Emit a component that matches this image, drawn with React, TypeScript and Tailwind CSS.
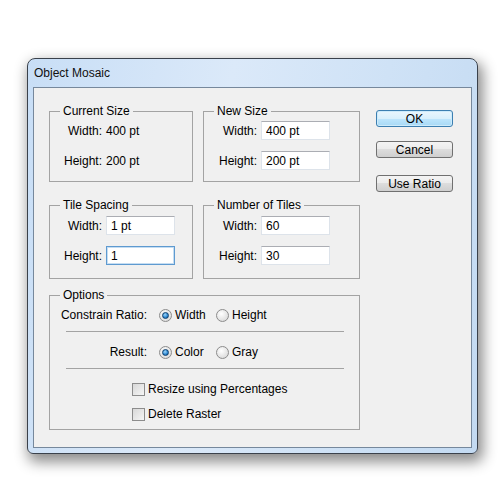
import React from 'react';

const inputBase =
  "h-[19px] w-[69px] bg-white px-[4px] text-[12px] leading-[17px] text-black outline-none font-['Liberation_Sans',Arial,sans-serif]";

function Group({ title, className, children }: {
  title: string,
  className: string,
  children: React.ReactNode
}) {
  return (
    <fieldset className={`border border-[#a3a3a3] ${className}`}>
      <legend className="ml-[10px] px-[3px] text-[12px] leading-[14px]">{title}</legend>
      {children}
    </fieldset>
  );
}

function Field({ label, value, labelW, focused }: {
  label: string,
  value: string,
  labelW: string,
  focused?: boolean
}) {
  return (
    <div className="flex h-[19px] items-center">
      <div className={`${labelW} text-right text-[12px]`}>{label}</div>
      <input
        readOnly
        value={value}
        className={
          focused
            ? `${inputBase} ml-[4px] border border-[#5e9ad0] shadow-[inset_0_0_0_1px_#c5ddf2]`
            : `${inputBase} ml-[4px] border border-[#dde3ea] border-t-[#abadb3]`
        }
      />
    </div>
  );
}

function Static({ label, value }: { label: string, value: string }) {
  return (
    <div className="flex h-[19px] items-center text-[12px]">
      <div className="w-[52px] text-right">{label}</div>
      <div className="ml-[4px]">{value}</div>
    </div>
  );
}

function Radio({ checked, label, w }: { checked?: boolean, label: string, w: string }) {
  return (
    <div className={`flex items-center ${w}`}>
      <div className="flex h-[13px] w-[13px] items-center justify-center rounded-full border border-[#8c8c8c] bg-[radial-gradient(circle_at_40%_35%,#ffffff,#d2d2d2)]">
        {checked && (
          <div className="h-[7px] w-[7px] rounded-full border border-[#0e3f6e] bg-[radial-gradient(circle_at_40%_35%,#9fd6fa,#2a85cf_60%,#0d4f8f)]" />
        )}
      </div>
      <span className="ml-[3px] text-[12px]">{label}</span>
    </div>
  );
}

function Check({ label }: { label: string }) {
  return (
    <div className="ml-[82px] flex h-[16px] items-center">
      <div className="h-[13px] w-[13px] border border-[#8c8c8c] bg-[linear-gradient(135deg,#d8d8d8,#f6f6f6)]" />
      <span className="ml-[3px] text-[12px]">{label}</span>
    </div>
  );
}

function Button({ label, primary, className }: { label: string, primary?: boolean, className: string }) {
  return (
    <div
      className={`flex h-[17px] w-[77px] items-center justify-center rounded-[3px] border text-[12px] ${className} ${
        primary
          ? 'border-[#3c7fb1] bg-[linear-gradient(#eaf6fd,#d9f0fc_50%,#bee6fd_50%,#a7d9f5)] shadow-[inset_0_0_0_1px_#cdebfb]'
          : 'border-[#707070] bg-[linear-gradient(#f4f4f4,#ebebeb_50%,#dddddd_50%,#cfcfcf)]'
      }`}
    >
      {label}
    </div>
  );
}

export default function App() {
  return (
    <div className="h-[500px] w-[500px] bg-white pl-[27px] pt-[58px] font-['Liberation_Sans',Arial,sans-serif] text-black">
      <div className="flex h-[396px] w-[451px] flex-col rounded-b-[6px] rounded-t-[8px] border border-[#3a414b] bg-[linear-gradient(100deg,#c8def6,#dbe9f9_40%,#cfe2f6_70%,#c3daf2)] shadow-[3px_6px_14px_2px_rgba(0,0,0,0.45)]">
        <div className="flex h-[28px] items-center pl-[6px] text-[12px] text-[#111]">Object Mosaic</div>
        <div className="mx-[5px] mb-[5px] flex flex-1 border border-[#76889c] bg-[#f0f0f0] pl-[15px] pt-[16px]">
          <div className="flex w-[311px] flex-col">
            <div className="flex gap-[10px]">
              <Group title="Current Size" className="h-[78px] w-[144px]">
                <div className="flex flex-col gap-[11px] pt-[3px]">
                  <Static label="Width:" value="400 pt" />
                  <Static label="Height:" value="200 pt" />
                </div>
              </Group>
              <Group title="New Size" className="h-[78px] w-[157px]">
                <div className="flex flex-col gap-[11px] pt-[3px]">
                  <Field label="Width:" value="400 pt" labelW="w-[53px]" />
                  <Field label="Height:" value="200 pt" labelW="w-[53px]" />
                </div>
              </Group>
            </div>
            <div className="mt-[16px] flex gap-[10px]">
              <Group title="Tile Spacing" className="h-[81px] w-[144px]">
                <div className="flex flex-col gap-[11px] pt-[4px]">
                  <Field label="Width:" value="1 pt" labelW="w-[52px]" />
                  <Field label="Height:" value="1" labelW="w-[52px]" focused />
                </div>
              </Group>
              <Group title="Number of Tiles" className="h-[81px] w-[157px]">
                <div className="flex flex-col gap-[11px] pt-[4px]">
                  <Field label="Width:" value="60" labelW="w-[53px]" />
                  <Field label="Height:" value="30" labelW="w-[53px]" />
                </div>
              </Group>
            </div>
            <Group title="Options" className="mt-[9px] h-[142px] w-[311px]">
              <div className="flex flex-col pt-[3px]">
                <div className="flex h-[20px] items-center">
                  <div className="w-[97px] text-right text-[12px]">Constrain Ratio:</div>
                  <div className="ml-[12px] flex">
                    <Radio checked label="Width" w="w-[57px]" />
                    <Radio label="Height" w="w-[60px]" />
                  </div>
                </div>
                <div className="ml-[16px] mt-[6px] h-px w-[278px] bg-[#a3a3a3]" />
                <div className="mt-[10px] flex h-[20px] items-center">
                  <div className="w-[97px] text-right text-[12px]">Result:</div>
                  <div className="ml-[12px] flex">
                    <Radio checked label="Color" w="w-[57px]" />
                    <Radio label="Gray" w="w-[60px]" />
                  </div>
                </div>
                <div className="ml-[16px] mt-[6px] h-px w-[278px] bg-[#a3a3a3]" />
                <div className="mt-[12px]">
                  <Check label="Resize using Percentages" />
                </div>
                <div className="mt-[9px]">
                  <Check label="Delete Raster" />
                </div>
              </div>
            </Group>
          </div>
          <div className="ml-[16px] mt-[6px] flex flex-col">
            <Button label="OK" primary className="" />
            <Button label="Cancel" className="mt-[14px]" />
            <Button label="Use Ratio" className="mt-[17px]" />
          </div>
        </div>
      </div>
    </div>
  );
}
